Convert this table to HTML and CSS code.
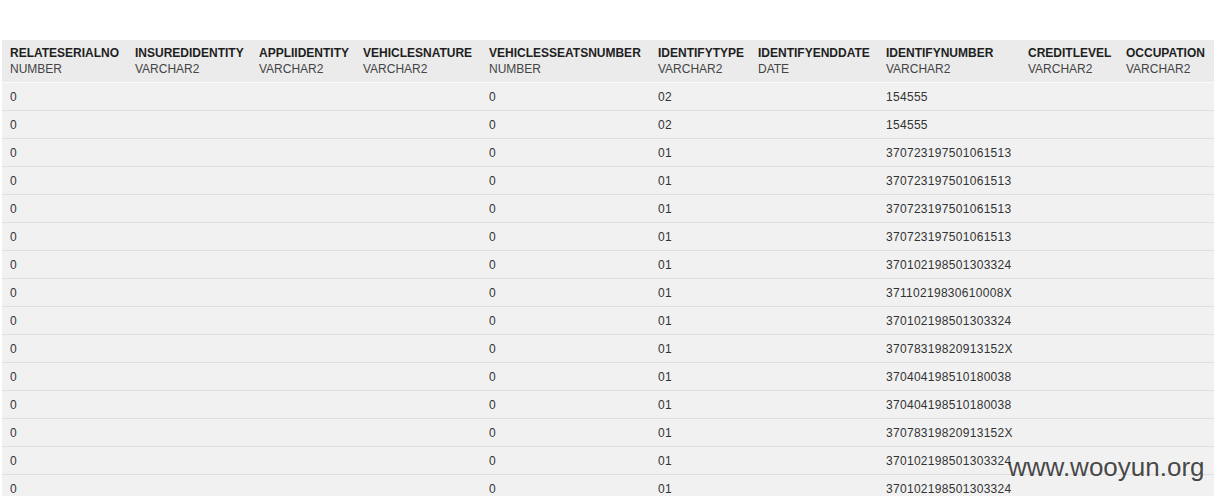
FILE: index.html
```html
<!DOCTYPE html>
<html>
<head>
<meta charset="utf-8">
<link rel="stylesheet" href="styles.css">
</head>
<body>
<div class="page">
<table class="grid">
<thead>
<tr>
<th><b>RELATESERIALNO</b><span>NUMBER</span></th>
<th><b>INSUREDIDENTITY</b><span>VARCHAR2</span></th>
<th><b>APPLIIDENTITY</b><span>VARCHAR2</span></th>
<th><b>VEHICLESNATURE</b><span>VARCHAR2</span></th>
<th><b>VEHICLESSEATSNUMBER</b><span>NUMBER</span></th>
<th><b>IDENTIFYTYPE</b><span>VARCHAR2</span></th>
<th><b>IDENTIFYENDDATE</b><span>DATE</span></th>
<th><b>IDENTIFYNUMBER</b><span>VARCHAR2</span></th>
<th><b>CREDITLEVEL</b><span>VARCHAR2</span></th>
<th><b>OCCUPATION</b><span>VARCHAR2</span></th>
</tr>
</thead>
<tbody>
<tr><td>0</td><td></td><td></td><td></td><td>0</td><td>02</td><td></td><td>154555</td><td></td><td></td></tr>
<tr><td>0</td><td></td><td></td><td></td><td>0</td><td>02</td><td></td><td>154555</td><td></td><td></td></tr>
<tr><td>0</td><td></td><td></td><td></td><td>0</td><td>01</td><td></td><td>370723197501061513</td><td></td><td></td></tr>
<tr><td>0</td><td></td><td></td><td></td><td>0</td><td>01</td><td></td><td>370723197501061513</td><td></td><td></td></tr>
<tr><td>0</td><td></td><td></td><td></td><td>0</td><td>01</td><td></td><td>370723197501061513</td><td></td><td></td></tr>
<tr><td>0</td><td></td><td></td><td></td><td>0</td><td>01</td><td></td><td>370723197501061513</td><td></td><td></td></tr>
<tr><td>0</td><td></td><td></td><td></td><td>0</td><td>01</td><td></td><td>370102198501303324</td><td></td><td></td></tr>
<tr><td>0</td><td></td><td></td><td></td><td>0</td><td>01</td><td></td><td>37110219830610008X</td><td></td><td></td></tr>
<tr><td>0</td><td></td><td></td><td></td><td>0</td><td>01</td><td></td><td>370102198501303324</td><td></td><td></td></tr>
<tr><td>0</td><td></td><td></td><td></td><td>0</td><td>01</td><td></td><td>37078319820913152X</td><td></td><td></td></tr>
<tr><td>0</td><td></td><td></td><td></td><td>0</td><td>01</td><td></td><td>370404198510180038</td><td></td><td></td></tr>
<tr><td>0</td><td></td><td></td><td></td><td>0</td><td>01</td><td></td><td>370404198510180038</td><td></td><td></td></tr>
<tr><td>0</td><td></td><td></td><td></td><td>0</td><td>01</td><td></td><td>37078319820913152X</td><td></td><td></td></tr>
<tr><td>0</td><td></td><td></td><td></td><td>0</td><td>01</td><td></td><td>370102198501303324</td><td></td><td></td></tr>
<tr><td>0</td><td></td><td></td><td></td><td>0</td><td>01</td><td></td><td>370102198501303324</td><td></td><td></td></tr>
</tbody>
</table>
<div class="watermark">www.wooyun.org</div>
</div>
</body>
</html>
```

FILE: styles.css
```css
html, body {
  margin: 0;
  padding: 0;
  background: #fff;
  overflow: hidden;
}
.page {
  position: relative;
  width: 1214px;
  height: 496px;
  overflow: hidden;
  padding-top: 40px;
  box-sizing: border-box;
  font-family: "Liberation Sans", Arial, sans-serif;
}
.grid {
  border-collapse: collapse;
  table-layout: fixed;
  width: 1240px;
  margin-left: 2px;
}
.grid th, .grid td {
  text-align: left;
  padding: 0 0 0 8px;
  white-space: nowrap;
  overflow: hidden;
}
.grid th:nth-child(1) { width: 117px; }
.grid th:nth-child(2) { width: 116px; }
.grid th:nth-child(3) { width: 96px; }
.grid th:nth-child(4) { width: 118px; }
.grid th:nth-child(5) { width: 161px; }
.grid th:nth-child(6) { width: 92px; }
.grid th:nth-child(7) { width: 120px; }
.grid th:nth-child(8) { width: 134px; }
.grid th:nth-child(9) { width: 90px; }
.grid th:nth-child(10) { width: 120px; }
.grid thead tr {
  background: #ebebeb;
  height: 42px;
}
.grid th {
  vertical-align: middle;
}
.grid th b {
  display: block;
  font-size: 12px;
  font-weight: bold;
  color: #1e1e1e;
  line-height: 16px;
}
.grid th span {
  display: block;
  font-size: 12px;
  font-weight: normal;
  color: #444;
  line-height: 16px;
}
.grid tbody tr {
  background: #f1f1f1;
  height: 28px;
  border-top: 1px solid #fbfbfb;
  border-bottom: 1px solid #dedede;
}
.grid td {
  font-size: 12px;
  color: #333;
  letter-spacing: 0.3px;
  height: 26px;
  padding-top: 2px;
  box-sizing: border-box;
  vertical-align: middle;
}
.watermark {
  position: absolute;
  left: 1008px;
  top: 450px;
  font-family: "Liberation Sans", Arial, sans-serif;
  font-size: 26px;
  color: rgba(40, 40, 40, 0.85);
  line-height: 34px;
  white-space: nowrap;
}
```
